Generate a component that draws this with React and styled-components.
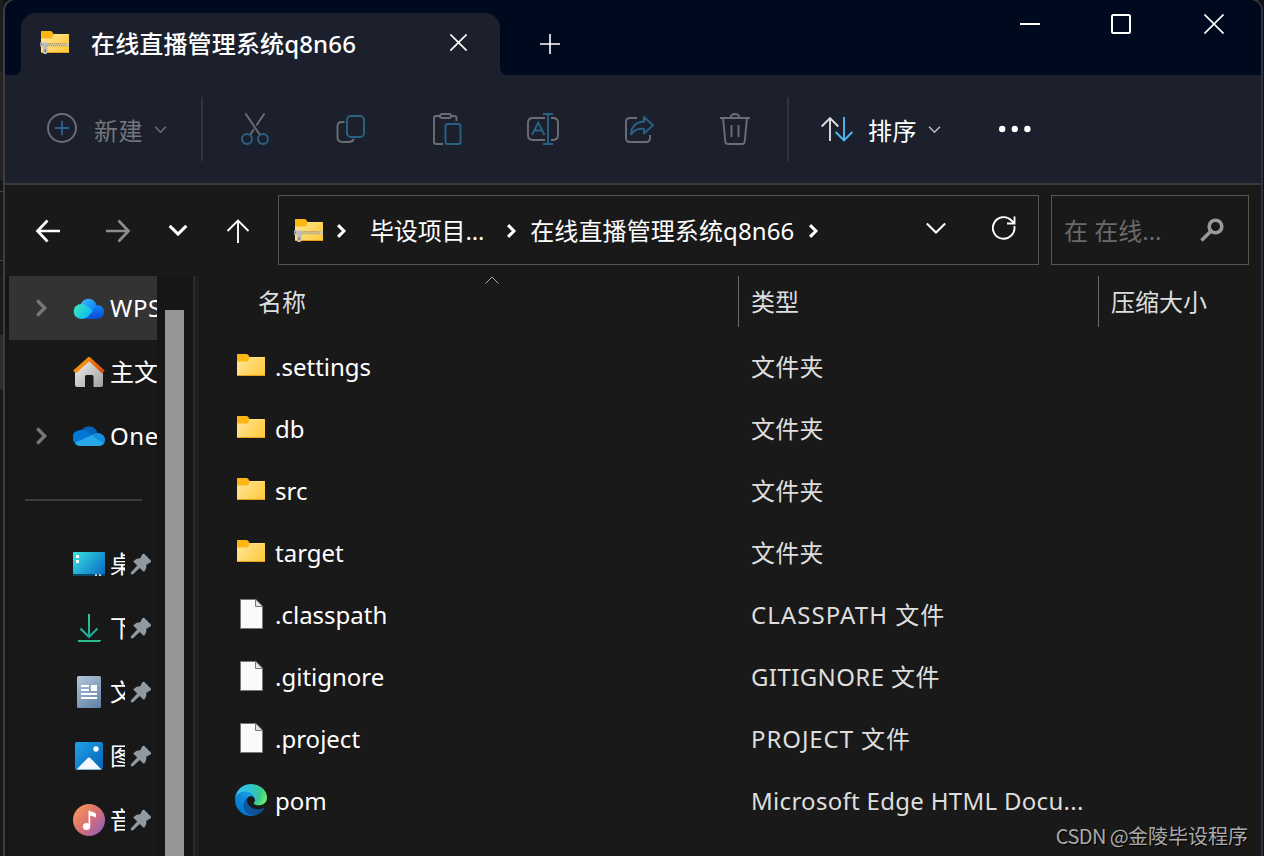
import React from 'react'
import styled, { createGlobalStyle } from 'styled-components'

const GlobalStyle = createGlobalStyle`
  * {
    box-sizing: border-box;
  }
  body {
    margin: 0;
    background: #1a1a1a;
    overflow: hidden;
  }
  svg {
    display: block;
    flex: none;
  }
`

const GREY = '#6c6e76'
const BLUE = '#2c6186'

/* ---------- icons ---------- */

const FolderIcon = ({ zip }) => (
  <svg width="32" height="32" viewBox={zip ? '0 0 32 32' : '0 1 32 32'} fill="none">
    <defs>
      <linearGradient id="folderFront" x1="2" y1="8" x2="30" y2="27" gradientUnits="userSpaceOnUse">
        <stop stopColor="#ffe69c" />
        <stop offset="1" stopColor="#ffc937" />
      </linearGradient>
    </defs>
    <path d="M2 5.5Q2 5 2.5 5H11.5Q13 5 14 7L14.500 8H30V14H2Z" fill="#fcb714" />
    <path d="M2 12.500H11.500Q12.800 12.500 13.500 11.500L14.500 9H29.500Q30 9 30 9.500V26H2Z" fill="url(#folderFront)" />
    <path d="M14.500 8.500H29.500" stroke="#ffdf80" />
    <path d="M2 26.500H30" stroke="#e8a11a" />
    {zip && (
      <g>
        <path d="M4 18.600H30" stroke="#b09c58" strokeWidth="3.200" />
        <path d="M8 18H28" stroke="#f6eccb" strokeDasharray="1 1" />
        <path d="M9 19.200H28" stroke="#f6eccb" strokeDasharray="1 1" />
        <path d="M27.500 17H30V20.200H27.500Z" fill="#c9c9c9" />
        <path d="M1 16.500H8V20H8.500V26.500L7.500 28H4.500L4 26.500V20.500H1Z" fill="#bcbcbc" />
        <path d="M1.500 17.500H3V19.500H1.500ZM5.500 23.500H7V26H5.500Z" fill="#777" />
      </g>
    )}
  </svg>
)

const FileIcon = () => (
  <svg width="32" height="32" viewBox="0 0 32 32" fill="none">
    <path d="M5.500 1.500H20.500L27.500 8.500V30.500H5.500Z" fill="#fafafa" stroke="#777" />
    <path d="M20.500 1.500V8.500H27.500" fill="#e2e2e2" stroke="#777" />
    <path d="M21.500 1L28 7.500V1Z" fill="#1a1a1a" />
    <path d="M20.800 1.500L27.500 8.200" stroke="#999" />
  </svg>
)

const EdgeIcon = () => (
  <svg width="32" height="32" viewBox="4.600 4.900 256 256">
    <defs>
      <linearGradient id="edgeDeep" x1="63" y1="178" x2="242" y2="178" gradientUnits="userSpaceOnUse">
        <stop stopColor="#0c59a4" />
        <stop offset="1" stopColor="#114a8b" />
      </linearGradient>
      <linearGradient id="edgeMid" x1="157" y1="115" x2="46" y2="236" gradientUnits="userSpaceOnUse">
        <stop stopColor="#1b9de2" />
        <stop offset="0.200" stopColor="#1595df" />
        <stop offset="0.700" stopColor="#0680d7" />
        <stop offset="1" stopColor="#0078d4" />
      </linearGradient>
      <radialGradient id="edgeTop" cx="30" cy="52" r="250" gradientUnits="userSpaceOnUse">
        <stop stopColor="#35c1f1" />
        <stop offset="0.400" stopColor="#2ec4d2" />
        <stop offset="0.700" stopColor="#36c797" />
        <stop offset="0.920" stopColor="#66eb6e" />
      </radialGradient>
    </defs>
    <path
      d="M235.680 195.450a93.730 93.730 0 0 1-10.540 4.710 101.870 101.870 0 0 1-35.900 6.460c-47.320 0-88.540-32.550-88.540-74.320A31.480 31.480 0 0 1 117.130 105c-42.800 1.800-53.800 46.400-53.800 72.530 0 73.880 68.090 81.370 82.760 81.370 7.910 0 19.840-2.300 27-4.560l1.310-.44a128.340 128.340 0 0 0 66.600-52.800 4 4 0 0 0-5.320-5.650z"
      fill="url(#edgeDeep)"
    />
    <path
      d="M110.340 246.340A79.200 79.200 0 0 1 87.600 225a80.720 80.720 0 0 1 29.530-120c3.120-1.470 8.450-4.130 15.540-4a32.350 32.350 0 0 1 25.690 13 31.880 31.880 0 0 1 6.360 18.660c0-.21 24.460-79.600-80-79.600-43.900 0-80 41.660-80 78.210a130.150 130.150 0 0 0 12.110 56 128 128 0 0 0 156.380 67.110 75.550 75.550 0 0 1-62.780-8z"
      fill="url(#edgeMid)"
    />
    <path
      d="M156.940 153.780c-.81 1.050-3.300 2.500-3.300 5.660 0 2.610 1.700 5.120 4.720 7.230 14.380 10 41.490 8.680 41.560 8.680a59.560 59.560 0 0 0 30.270-8.350A61.380 61.380 0 0 0 260.610 114.100c.26-22.410-8-37.310-11.340-43.910C228.090 28.760 182.350 4.920 132.610 4.920A128 128 0 0 0 4.630 131.120c.48-36.540 36.800-66.050 80-66.050 3.500 0 23.460.34 42 10.070 16.340 8.580 24.900 18.940 30.850 29.210 6.180 10.670 7.280 24.150 7.280 29.520s-2.740 13.330-7.820 19.910z"
      fill="url(#edgeTop)"
    />
  </svg>
)

const WpsCloudIcon = () => (
  <svg width="32" height="32" viewBox="1 1 32 32">
    <defs>
      <linearGradient id="wpsLeft" x1="2" y1="14" x2="20" y2="27" gradientUnits="userSpaceOnUse">
        <stop stopColor="#3fe8b8" />
        <stop offset="1" stopColor="#00b4ff" />
      </linearGradient>
      <linearGradient id="wpsTop" x1="8" y1="5" x2="24" y2="18" gradientUnits="userSpaceOnUse">
        <stop stopColor="#35c3ff" />
        <stop offset="1" stopColor="#1583f5" />
      </linearGradient>
      <linearGradient id="wpsRight" x1="24" y1="13" x2="24" y2="27" gradientUnits="userSpaceOnUse">
        <stop stopColor="#1585fa" />
        <stop offset="1" stopColor="#0a4fd6" />
      </linearGradient>
    </defs>
    <path d="M13 28L22 14Q32 13 32 21Q31.500 28 24 28Z" fill="url(#wpsRight)" />
    <path d="M8.500 14A8.200 8.200 0 0 1 24.500 14.400L19 20Z" fill="url(#wpsTop)" />
    <path d="M9.500 28A7.500 7.500 0 1 1 13 14Q17 15.500 21 20L16 25.500Q13 28 9.500 28Z" fill="url(#wpsLeft)" />
  </svg>
)

const HomeIcon = () => (
  <svg width="32" height="32" viewBox="0 0 32 32">
    <defs>
      <linearGradient id="homeWall" x1="6" y1="8" x2="28" y2="30" gradientUnits="userSpaceOnUse">
        <stop stopColor="#e6e6e6" />
        <stop offset="1" stopColor="#a3a3a3" />
      </linearGradient>
      <linearGradient id="homeRoof" x1="4" y1="4" x2="30" y2="18" gradientUnits="userSpaceOnUse">
        <stop stopColor="#f79a10" />
        <stop offset="0.500" stopColor="#ee7a0c" />
        <stop offset="1" stopColor="#d04312" />
      </linearGradient>
    </defs>
    <path d="M2 15L16 2.500L30 15V29Q30 31 28 31H20.500V20.500Q20.500 19 19 19H13.500Q12 19 12 20.500V31H4.500Q2 31 2 28.500Z" fill="url(#homeWall)" />
    <path d="M1.500 16L16 2.800L30.500 16" fill="none" stroke="url(#homeRoof)" strokeWidth="3.800" strokeLinejoin="round" />
  </svg>
)

const OneDriveIcon = () => (
  <svg width="32" height="32" viewBox="0 0 32 32">
    <path d="M8 11.500A8.800 8.800 0 0 1 24.500 13L18 19Z" fill="#0364b8" />
    <path d="M1.700 22.800A7 7 0 0 1 5 10.600Q11 8.500 15.500 12.200L20 15.500L6 24Z" fill="#0078d4" />
    <path d="M19 15Q22 12.800 25 12.900Q32 13.500 32 20.500Q31.500 23 30.500 24Z" fill="#1490df" />
    <path d="M1.700 22.800L19 15L31 23.700Q29 26 26 26H7Q3.500 26 1.700 22.800Z" fill="#28a8ea" />
  </svg>
)

const DesktopIcon = () => (
  <svg width="32" height="32" viewBox="0 0 32 32">
    <defs>
      <linearGradient id="desk" x1="2" y1="4" x2="30" y2="27" gradientUnits="userSpaceOnUse">
        <stop stopColor="#35dfe3" />
        <stop offset="1" stopColor="#0b6cc4" />
      </linearGradient>
    </defs>
    <rect x="0" y="4" width="32" height="24" rx="1" fill="url(#desk)" />
    <path d="M0 26H32V27Q32 28 31 28H1Q0 28 0 27Z" fill="#0a4668" />
    <path d="M3 7H6V10H3ZM3 12H6V15H3Z" fill="#fff" />
    <path d="M22 26H24V28H22ZM26 26H28V28H26Z" fill="#b9c8d2" />
  </svg>
)

const DownloadIcon = () => (
  <svg width="32" height="32" viewBox="0 0 32 32" fill="none" strokeWidth="2">
    <defs>
      <linearGradient id="down" x1="5" y1="2" x2="20" y2="30" gradientUnits="userSpaceOnUse">
        <stop stopColor="#31d48a" />
        <stop offset="1" stopColor="#12a39a" />
      </linearGradient>
    </defs>
    <path d="M16.010 2V25M7.500 16.500L16 25L24.500 16.500" stroke="url(#down)" />
    <path d="M5 29H27V29.010" stroke="#27bd8c" />
  </svg>
)

const DocumentIcon = () => (
  <svg width="32" height="32" viewBox="0 0 32 32">
    <defs>
      <linearGradient id="doc" x1="4" y1="0" x2="28" y2="32" gradientUnits="userSpaceOnUse">
        <stop stopColor="#b4c6da" />
        <stop offset="1" stopColor="#5d80a2" />
      </linearGradient>
    </defs>
    <rect x="4" y="0" width="24" height="32" rx="1.500" fill="url(#doc)" />
    <path d="M8 10H16M8 14H16M8 18H24M8 22H24" stroke="#fff" strokeWidth="1.800" />
    <rect x="18" y="9" width="6" height="6" fill="#fff" />
  </svg>
)

const PictureIcon = () => (
  <svg width="32" height="32" viewBox="0 0 32 32">
    <defs>
      <linearGradient id="pic" x1="2" y1="2" x2="30" y2="30" gradientUnits="userSpaceOnUse">
        <stop stopColor="#20a4ea" />
        <stop offset="1" stopColor="#0560b4" />
      </linearGradient>
    </defs>
    <rect x="2" y="2" width="28" height="28" rx="2" fill="url(#pic)" />
    <path d="M3.500 29.500L15 17.800Q16 17 17 17.800L28.500 29.500Z" fill="#f3f8fd" />
    <circle cx="23" cy="9" r="2.700" fill="#fff" />
  </svg>
)

const MusicIcon = () => (
  <svg width="32" height="32" viewBox="0 0 32 32">
    <defs>
      <linearGradient id="music" x1="3" y1="6" x2="28" y2="27" gradientUnits="userSpaceOnUse">
        <stop stopColor="#f5905a" />
        <stop offset="0.500" stopColor="#d97172" />
        <stop offset="1" stopColor="#9c60b0" />
      </linearGradient>
    </defs>
    <circle cx="16" cy="16" r="16" fill="url(#music)" />
    <circle cx="13.500" cy="22.500" r="3.600" fill="#fff" />
    <path d="M15.500 6.500L21 8.500Q23 9.200 23 10.500V13.500L17.200 11.500V22.500H15.500Z" fill="#fff" />
  </svg>
)

const PinIcon = () => (
  <svg width="22" height="22" viewBox="0 0 22 22">
    <path
      d="M12.300 1.200Q13.300 .2 14.400 1.100L20.800 7.400Q21.700 8.600 20.400 9.400L16.300 11.800Q16.900 16 13.900 18.900L9.700 14.900L3 21.200L.8 21.300L1 19.200L7.200 12.400L3.200 8.400Q6.300 5 10.200 5.300Z"
      fill="#8f9aa2"
    />
  </svg>
)

const Chevron = ({ size = 12, width = 1.5, color = '#fff', turn = 0 }) => (
  <svg width={size} height={size} viewBox="0 0 12 12" fill="none">
    <path
      d="M1 3.500L6 8.500L11 3.500"
      stroke={color}
      strokeWidth={width}
      transform={`rotate(${turn} 6 6)`}
    />
  </svg>
)

const NewIcon = () => (
  <svg width="32" height="32" viewBox="0 0 32 32" fill="none" strokeWidth="1.900">
    <circle cx="16" cy="15" r="14" stroke={GREY} />
    <path d="M16 8V22M9 15H23" stroke={BLUE} />
  </svg>
)

const CutIcon = () => (
  <svg width="32" height="32" viewBox="0 0 32 32" fill="none" strokeWidth="1.900">
    <path d="M6.500 .5L21 22M25.500 .5L17.300 12.500M15 16L11 22" stroke={GREY} />
    <circle cx="8" cy="26" r="5" stroke={BLUE} />
    <circle cx="24" cy="26" r="5" stroke={BLUE} />
  </svg>
)

const CopyIcon = () => (
  <svg width="32" height="32" viewBox="0 0 32 32" fill="none" strokeWidth="1.900">
    <rect x="12" y="3" width="17" height="21" rx="4" stroke={BLUE} />
    <path d="M9.500 9H7Q2.500 9 2.500 13V24Q2.500 29 7.500 29H13.500Q17.500 29 19 26" stroke={GREY} />
  </svg>
)

const PasteIcon = () => (
  <svg width="32" height="32" viewBox="0 0 32 32" fill="none" strokeWidth="1.900">
    <path d="M9 3H5Q3 3 3 5V29Q3 31 5 31H12M21 3H23.500Q25.500 3 25.500 5V8" stroke={GREY} />
    <rect x="9" y="1" width="11" height="4" rx="2" stroke={GREY} />
    <rect x="14.500" y="11" width="15" height="20" rx="1.800" stroke={BLUE} />
  </svg>
)

const RenameIcon = () => (
  <svg width="32" height="32" viewBox="0 0 32 32" fill="none" strokeWidth="1.900">
    <path d="M18 5H6Q1 5 1 10V22Q1 27 6 27H18M24 5H26Q31 5 31 10V22Q31 27 26 27H24" stroke={GREY} />
    <path d="M21 1V31M16 1H26M16 31H26M5 22L11.300 9.500L17.500 22M7.500 17.500H15" stroke={BLUE} />
  </svg>
)

const ShareIcon = () => (
  <svg width="32" height="32" viewBox="0 0 32 32" fill="none" strokeWidth="1.900">
    <path d="M14 5H7Q3 5 3 9V25Q3 29 7 29H23Q27 29 27 25V22" stroke={GREY} />
    <path
      d="M21 4L30 12.200L21 20.500V16Q13 14.500 8 21.500Q8.500 9.500 21 8.500Z"
      stroke={BLUE}
      strokeLinejoin="round"
    />
  </svg>
)

const DeleteIcon = () => (
  <svg width="32" height="32" viewBox="0 0 32 32" fill="none" stroke={GREY} strokeWidth="1.900">
    <path d="M1 5H31M11.500 5Q12 1 16 1Q20 1 20.500 5" />
    <path d="M4 5L6.300 28.500Q6.500 31 9 31H23Q25.500 31 25.700 28.500L28 5M12.500 12V24M19.500 12V24" />
  </svg>
)

const SortIcon = () => (
  <svg width="32" height="32" viewBox="0 0 32 32" fill="none" strokeWidth="1.900">
    <path d="M9 28V5M.7 13.500L9 5L17.300 13.500" stroke="#dedfe1" />
    <path d="M23 4V27.500M14.700 19L23 27.500L31.300 19" stroke="#4cb8f5" />
  </svg>
)

const DotsIcon = () => (
  <svg width="34" height="8" viewBox="0 0 34 8" fill="#fff">
    <circle cx="4.200" cy="4" r="3.200" />
    <circle cx="16.800" cy="4" r="3.200" />
    <circle cx="29.400" cy="4" r="3.200" />
  </svg>
)

const CloseIcon = ({ size }) => (
  <svg width={size} height={size} viewBox="0 0 20 20" fill="none">
    <path d="M.5 .5L19.500 19.500M19.500 .5L.5 19.500" stroke="#fff" strokeWidth={32 / size} />
  </svg>
)

const ArrowIcon = ({ color = '#fff', flip, width = 2.7 }) => (
  <svg width="26" height="24" viewBox="0 0 26 24" fill="none">
    <path
      d="M25 12H2.500M12.500 1.500L2.500 12L12.500 22.500"
      stroke={color}
      strokeWidth={width}
      transform={flip ? 'translate(26 0) scale(-1 1)' : undefined}
    />
  </svg>
)

const UpIcon = () => (
  <svg width="24" height="24" viewBox="0 0 24 24" fill="none">
    <path d="M12 24V1.500M1.500 12L12 1.500L22.500 12" stroke="#fff" strokeWidth="1.900" />
  </svg>
)

const RefreshIcon = () => (
  <svg width="24" height="24" viewBox="0 0 24 24" fill="none" stroke="#fff" strokeWidth="1.900">
    <path d="M22.300 10A10.800 10.800 0 1 1 19.500 4.500L22 7" />
    <path d="M22.500 .5V7.500H15" />
  </svg>
)

const SearchIcon = () => (
  <svg width="24" height="24" viewBox="0 0 24 24" fill="none" stroke="#999">
    <circle cx="15.500" cy="8.500" r="6.300" strokeWidth="3.600" />
    <path d="M11 13L1.500 22.500" strokeWidth="3.600" />
  </svg>
)

/* ---------- data ---------- */

const tools = [CutIcon, CopyIcon, PasteIcon, RenameIcon, ShareIcon, DeleteIcon]

const places = [
  { name: 'WPS', icon: WpsCloudIcon, expandable: true, active: true },
  { name: '主文', icon: HomeIcon },
  { name: 'One', icon: OneDriveIcon, expandable: true },
]

const pinned = [
  { name: '桌', icon: DesktopIcon },
  { name: '下', icon: DownloadIcon },
  { name: '文', icon: DocumentIcon },
  { name: '图', icon: PictureIcon },
  { name: '音', icon: MusicIcon },
]

const files = [
  { name: '.settings', type: '文件夹', icon: FolderIcon, spacing: 0.3 },
  { name: 'db', type: '文件夹', icon: FolderIcon, spacing: 0.3 },
  { name: 'src', type: '文件夹', icon: FolderIcon, spacing: 0.3 },
  { name: 'target', type: '文件夹', icon: FolderIcon, spacing: 0.3 },
  { name: '.classpath', type: 'CLASSPATH 文件', icon: FileIcon, spacing: 1.05 },
  { name: '.gitignore', type: 'GITIGNORE 文件', icon: FileIcon, spacing: 0.4 },
  { name: '.project', type: 'PROJECT 文件', icon: FileIcon, spacing: 0.9 },
  { name: 'pom', type: 'Microsoft Edge HTML Docu...', icon: EdgeIcon, spacing: 0.3 },
]

const Place = ({ place, isPinned }) => {
  const Icon = place.icon
  return (
    <PlaceRow $active={place.active}>
      <Expander>
        {place.expandable && <Chevron size={18} width={2.2} color="#777" turn={-90} />}
      </Expander>
      <Icon />
      <PlaceName $spacing={place.expandable ? 0.6 : 0}>{place.name}</PlaceName>
      {isPinned && (
        <PinSlot>
          <PinIcon />
        </PinSlot>
      )}
    </PlaceRow>
  )
}

const App = () => {
  return (
    <React.Fragment>
      <GlobalStyle />
      <Desktop>
        <Behind>
          <BehindBlock $height={71} $bg="#1c1c1c" />
          <BehindBlock $height={109} $bg="#232323" />
          <BehindBlock $height={11} $bg="#171717" />
          <BehindBlock $height={69} $bg="#1a1a1a" $line />
          <BehindBlock $height={75} $bg="#1a1a1a" $line />
          <BehindBlock $height={54} $bg="#2d2d2d" />
          <BehindBlock $height={467} $bg="#191919" />
        </Behind>
        <Window>
          <TitleBar>
            <TitleLead />
            <TabSlot>
              <Tab>
                <FolderIcon zip />
                <TabTitle>在线直播管理系统q8n66</TabTitle>
                <CloseIcon size={17} />
              </Tab>
            </TabSlot>
            <TitleRest>
              <NewTab>
                <svg width="20" height="20" viewBox="0 0 20 20">
                  <path d="M10 0V20M0 10H20" stroke="#fff" strokeWidth="1.600" />
                </svg>
              </NewTab>
              <Controls>
                <svg width="20" height="20" viewBox="0 0 20 20">
                  <path d="M0 10H20" stroke="#fff" strokeWidth="2" />
                </svg>
                <svg width="20" height="20" viewBox="0 0 20 20" fill="none">
                  <rect x="1" y="1" width="18" height="18" rx="1.500" stroke="#fff" strokeWidth="2" />
                </svg>
                <CloseIcon size={20} />
              </Controls>
            </TitleRest>
          </TitleBar>

          <Toolbar>
            <NewButton>
              <NewIcon />
              <ToolLabel $dim>新建</ToolLabel>
              <Chevron size={13} width={1.5} color={GREY} />
            </NewButton>
            <ToolDivider />
            <ToolGroup>
              {tools.map((Icon, i) => (
                <ToolButton key={i}>
                  <Icon />
                </ToolButton>
              ))}
            </ToolGroup>
            <ToolDivider />
            <SortButton>
              <SortIcon />
              <ToolLabel>排序</ToolLabel>
              <Chevron size={13} width={1.5} color="#b9bbc0" />
            </SortButton>
            <DotsIcon />
          </Toolbar>

          <NavBar>
            <NavButtons>
              <ArrowIcon />
              <ArrowIcon flip color="#8c8c8c" />
              <RecentSlot>
                <Chevron size={20} width={1.8} />
              </RecentSlot>
              <UpIcon />
            </NavButtons>
            <AddressBox>
              <FolderIcon zip />
              <CrumbArrow $left={9} $right={22}>
                <Chevron size={14} width={2.6} turn={-90} />
              </CrumbArrow>
              <Crumb $spacing={-0.15}>毕设项目...</Crumb>
              <CrumbArrow $left={20} $right={12}>
                <Chevron size={14} width={2.6} turn={-90} />
              </CrumbArrow>
              <Crumb $spacing={0.1}>在线直播管理系统q8n66</Crumb>
              <CrumbArrow $left={12} $right={0}>
                <Chevron size={14} width={2.6} turn={-90} />
              </CrumbArrow>
              <AddressTools>
                <Chevron size={22} width={1.1} />
                <RefreshIcon />
              </AddressTools>
            </AddressBox>
            <SearchBox>
              <SearchHint>在 在线...</SearchHint>
              <SearchIcon />
            </SearchBox>
          </NavBar>

          <Body>
            <Sidebar>
              <Places>
                {places.map((p) => (
                  <Place key={p.name} place={p} />
                ))}
                <PlaceGap>
                  <PlaceLine />
                </PlaceGap>
                {pinned.map((p) => (
                  <Place key={p.name} place={p} isPinned />
                ))}
              </Places>
              <ScrollTrack>
                <ScrollThumb />
              </ScrollTrack>
            </Sidebar>
            <Splitter />
            <FileList>
              <HeaderRow>
                <HeaderCell $pad={59}>
                  名称
                  <SortMark>
                    <svg width="14" height="8" viewBox="0 0 14 8" fill="none">
                      <path d="M.5 7.500L7 1L13.500 7.500" stroke="#aaa" />
                    </svg>
                  </SortMark>
                </HeaderCell>
                <HeaderCell $pad={12} $line>
                  类型
                </HeaderCell>
                <HeaderCell $pad={12} $line>
                  压缩大小
                </HeaderCell>
              </HeaderRow>
              {files.map((f) => (
                <FileRow key={f.name}>
                  <FileName>
                    <f.icon />
                    {f.name}
                  </FileName>
                  <FileType $spacing={f.spacing}>{f.type}</FileType>
                </FileRow>
              ))}
            </FileList>
          </Body>
        </Window>
        <RightEdge />
        <Watermark>
          <WatermarkSite>CSDN @</WatermarkSite>金陵毕设程序
        </Watermark>
      </Desktop>
    </React.Fragment>
  )
}

/* ---------- frame ---------- */

const Desktop = styled.div`
  position: relative;
  display: flex;
  width: 1264px;
  height: 856px;
  overflow: hidden;
  color: #fff;
  background: #101216;
  font-family: 'Noto Sans', 'Noto Sans CJK SC', sans-serif;
  font-size: 24px;
  line-height: 32px;
  white-space: nowrap;
`

const Behind = styled.div`
  width: 3px;
  flex: none;
`

const BehindBlock = styled.div`
  height: ${(props) => props.$height}px;
  background: ${(props) => props.$bg};
  border-top: ${(props) => (props.$line ? '1px solid #444' : 'none')};
`

const RightEdge = styled.div`
  width: 1px;
  flex: none;
  background: #0a1122;
`

const Window = styled.div`
  display: flex;
  flex-direction: column;
  flex: 1;
  min-width: 0;
  height: 860px;
  margin-top: -2px;
  border: 2px solid #3c3d40;
  border-right-color: #2d3240;
  border-radius: 13px 13px 0 0;
  background: #191919;
  overflow: hidden;
`

const TitleBar = styled.div`
  display: flex;
  flex: none;
  height: 75px;
  background: #1b202c;
`

const TitleLead = styled.div`
  width: 16px;
  background: #000a1e;
  border-bottom-right-radius: 7px;
`

const TabSlot = styled.div`
  width: 479px;
  padding-top: 13px;
  background: linear-gradient(#000a1e 50%, #1b202c 50%);
`

const Tab = styled.div`
  display: flex;
  align-items: center;
  height: 62px;
  padding: 0 33px 4px 18px;
  border-radius: 15px 15px 0 0;
  background: #1b202c;
`

const TabTitle = styled.div`
  flex: 1;
  margin-left: 20px;
  padding-top: 4px;
  font-weight: 500;
  letter-spacing: 0.15px;
`

const TitleRest = styled.div`
  display: flex;
  flex: 1;
  justify-content: space-between;
  background: #000a1e;
  border-bottom-left-radius: 7px;
`

const NewTab = styled.div`
  padding: 34px 0 0 40px;
`

const Controls = styled.div`
  display: grid;
  grid-template-columns: 91px 93px 20px;
  padding: 14px 37px 0 0;
`

/* ---------- toolbar ---------- */

const Toolbar = styled.div`
  display: flex;
  align-items: center;
  flex: none;
  height: 110px;
  border-bottom: 2px solid #3a3a3a;
  background: #1b202c;
`

const NewButton = styled.div`
  display: flex;
  align-items: center;
  width: 196px;
  padding-left: 41px;
`

const ToolLabel = styled.div`
  margin: 3px 11px 0 16px;
  letter-spacing: 0.5px;
  color: ${(props) => (props.$dim ? '#73757c' : '#fff')};
`

const ToolDivider = styled.div`
  width: 2px;
  height: 64px;
  background: #303440;
`

const ToolGroup = styled.div`
  display: flex;
  width: 584px;
  padding-left: 4px;
`

const ToolButton = styled.div`
  display: flex;
  justify-content: center;
  width: 96px;
`

const SortButton = styled.div`
  display: flex;
  align-items: center;
  width: 209px;
  padding-left: 32px;

  ${ToolLabel} {
    margin-left: 15px;
  }
`

/* ---------- navigation ---------- */

const NavBar = styled.div`
  display: flex;
  flex: none;
  height: 91px;
  padding: 10px 12px 11px 0;
`

const NavButtons = styled.div`
  display: grid;
  grid-template-columns: 70px 63px 58px 1fr;
  align-items: center;
  width: 273px;
  padding: 2px 0 0 30px;
`

const RecentSlot = styled.div`
  padding-bottom: 2px;
`

const AddressBox = styled.div`
  display: flex;
  align-items: center;
  width: 761px;
  padding-left: 14px;
  border: 1px solid #555;
`

const Crumb = styled.div`
  padding-top: 1px;
  letter-spacing: ${(props) => props.$spacing}px;
`

const CrumbArrow = styled.div`
  margin: 2px ${(props) => props.$right}px 0 ${(props) => props.$left}px;
`

const AddressTools = styled.div`
  display: flex;
  align-items: center;
  gap: 45px;
  margin-left: auto;
  padding: 0 22px 4px 0;
`

const SearchBox = styled.div`
  display: flex;
  align-items: center;
  justify-content: space-between;
  width: 198px;
  margin-left: 12px;
  padding: 0 24px 0 12px;
  border: 1px solid #555;
`

const SearchHint = styled.div`
  padding-top: 1px;
  color: #6a6a6a;
`

/* ---------- sidebar ---------- */

const Body = styled.div`
  display: flex;
  flex: 1;
  min-height: 0;
`

const Sidebar = styled.div`
  display: flex;
  width: 188px;
  border-left: 4px solid #151515;
  background: #181818;
`

const Places = styled.div`
  width: 148px;
  overflow: hidden;
`

const PlaceRow = styled.div`
  display: flex;
  align-items: center;
  height: 64px;
  background: ${(props) => (props.$active ? '#333' : 'transparent')};
`

const Expander = styled.div`
  width: 64px;
  flex: none;
  padding-left: 23px;
`

const PlaceName = styled.div`
  flex: 1;
  min-width: 0;
  margin-left: 5px;
  overflow: hidden;
  letter-spacing: ${(props) => props.$spacing}px;
`

const PinSlot = styled.div`
  width: 32px;
  padding-left: 5px;
`

const PlaceGap = styled.div`
  display: flex;
  align-items: center;
  height: 64px;
  padding: 0 15px 0 16px;
`

const PlaceLine = styled.div`
  flex: 1;
  height: 2px;
  background: #3c3c3c;
`

const ScrollTrack = styled.div`
  width: 36px;
  padding: 34px 9px 0 8px;
  background: #161616;
`

const ScrollThumb = styled.div`
  height: 100%;
  background: #959595;
`

const Splitter = styled.div`
  width: 6px;
  border-left: 2px solid #2b2b2b;
  background: #1f1f1f;
`

/* ---------- file list ---------- */

const FileList = styled.div`
  flex: 1;
  min-width: 0;
`

const HeaderRow = styled.div`
  display: grid;
  grid-template-columns: 539px 360px 1fr;
  height: 51px;
  margin-bottom: 9px;
`

const HeaderCell = styled.div`
  position: relative;
  padding: 10px 0 0 ${(props) => props.$pad}px;
  border-left: ${(props) => (props.$line ? '1px solid #666' : 'none')};
  color: #dedede;
`

const SortMark = styled.div`
  position: absolute;
  top: 0;
  left: 286px;
`

const FileRow = styled.div`
  display: grid;
  grid-template-columns: 552px 1fr;
  height: 62px;
  line-height: 62px;
`

const FileName = styled.div`
  display: flex;
  align-items: center;
  gap: 8px;
  padding-left: 36px;

  svg {
    margin-bottom: 2px;
  }
`

const FileType = styled.div`
  color: #dedede;
  letter-spacing: ${(props) => props.$spacing}px;
`

const Watermark = styled.div`
  position: absolute;
  right: 16px;
  bottom: 4px;
  color: #aaa;
  font-family: 'Noto Sans CJK SC', sans-serif;
  font-size: 20px;
  text-shadow: 1px 1px 1px #000;
`

const WatermarkSite = styled.span`
  letter-spacing: -0.6px;
`

export default App
